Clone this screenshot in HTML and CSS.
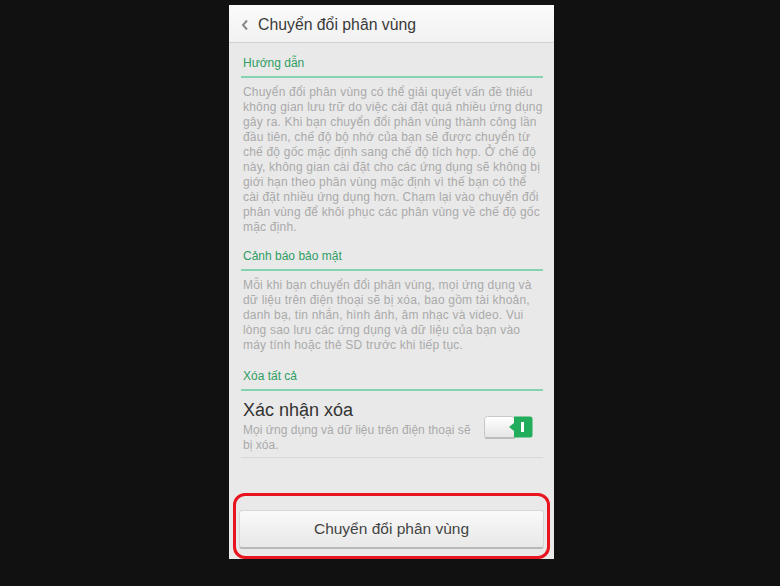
FILE: index.html
```html
<!DOCTYPE html>
<html lang="vi">
<head>
<meta charset="utf-8">
<title>Chuyển đổi phân vùng</title>
<link rel="stylesheet" href="styles.css">
</head>
<body>
<div class="screen">
  <header class="topbar">
    <svg class="back" width="8" height="12" viewBox="0 0 8 12"><path d="M6 1.5 L2 6 L6 10.5" fill="none" stroke="#888" stroke-width="2"/></svg>
    <span class="title">Chuyển đổi phân vùng</span>
  </header>
  <main class="content">
    <h2 class="sec">Hướng dẫn</h2>
    <p class="para">Chuyển đổi phân vùng có thể giải quyết vấn đề thiếu<br>không gian lưu trữ do việc cài đặt quá nhiều ứng dụng<br>gây ra. Khi bạn chuyển đổi phân vùng thành công lần<br>đầu tiên, chế độ bộ nhớ của bạn sẽ được chuyển từ<br>chế độ gốc mặc định sang chế độ tích hợp. Ở chế độ<br>này, không gian cài đặt cho các ứng dụng sẽ không bị<br>giới hạn theo phân vùng mặc định vì thế bạn có thể<br>cài đặt nhiều ứng dụng hơn. Chạm lại vào chuyển đổi<br>phân vùng để khôi phục các phân vùng về chế độ gốc<br>mặc định.</p>
    <h2 class="sec sec2">Cảnh báo bảo mật</h2>
    <p class="para">Mỗi khi bạn chuyển đổi phân vùng, mọi ứng dụng và<br>dữ liệu trên điện thoại sẽ bị xóa, bao gồm tài khoản,<br>danh bạ, tin nhắn, hình ảnh, âm nhạc và video. Vui<br>lòng sao lưu các ứng dụng và dữ liệu của bạn vào<br>máy tính hoặc thẻ SD trước khi tiếp tục.</p>
    <h2 class="sec sec3">Xóa tất cả</h2>
    <div class="row">
      <div class="row-text">
        <div class="row-title">Xác nhận xóa</div>
        <div class="row-sub">Mọi ứng dụng và dữ liệu trên điện thoại sẽ<br>bị xóa.</div>
      </div>
      <svg class="toggle" width="50" height="24" viewBox="0 0 50 24">
        <defs>
          <linearGradient id="wg" x1="0" y1="0" x2="0" y2="1">
            <stop offset="0" stop-color="#ffffff"/>
            <stop offset="1" stop-color="#e4e4e4"/>
          </linearGradient>
        </defs>
        <rect x="0.5" y="0.5" width="30" height="22" rx="3" fill="url(#wg)" stroke="#c8c8c8"/>
        <rect x="1" y="21" width="30" height="2" rx="1" fill="#bdbdbd"/>
        <path d="M30 0.5 H46 Q48.5 0.5 48.5 3 V19 Q48.5 21.5 46 21.5 H30 V15 L25 11 L30 7 Z" fill="#22ad5c"/>
        <rect x="37" y="6" width="3" height="10" fill="#ffffff"/>
      </svg>
    </div>
    <div class="spacer"></div>
    <div class="highlight">
      <button class="btn">Chuyển đổi phân vùng</button>
    </div>
  </main>
</div>
</body>
</html>
```

FILE: styles.css
```css
html, body {
  margin: 0;
  padding: 0;
}
body {
  background: #111111;
  width: 780px;
  height: 586px;
  overflow: hidden;
  font-family: "Liberation Sans", Arial, sans-serif;
}
.screen {
  margin: 5px 0 0 229px;
  width: 325px;
  height: 554px;
  background: #e9e9e9;
  display: flex;
  flex-direction: column;
}
.topbar {
  height: 38px;
  flex: none;
  display: flex;
  align-items: center;
  padding: 2px 0 0 12px;
  box-sizing: border-box;
  background: linear-gradient(#fbfbfb, #f1f1f1);
  border-bottom: 1px solid #d2d2d2;
}
.back {
  margin-right: 9px;
}
.title {
  font-size: 15.8px;
  color: #3a3a3a;
}
.content {
  flex: 1;
  display: flex;
  flex-direction: column;
  padding: 0 11px 0 12px;
}
.sec {
  margin: 0;
  font-size: 12px;
  line-height: 14px;
  font-weight: normal;
  color: #2f9e63;
  padding: 13px 0 6px 2px;
  border-bottom: 2px solid #86d3b2;
}
.sec2 {
  padding-top: 14px;
}
.sec3 {
  padding-top: 16px;
}
.para {
  margin: 7px 0 0 0;
  padding-left: 2px;
  font-size: 12px;
  letter-spacing: 0.2px;
  line-height: 15px;
  color: #aaaaaa;
  white-space: nowrap;
}
.row {
  display: flex;
  align-items: center;
  justify-content: space-between;
  padding: 8px 9px 4px 2px;
  border-bottom: 1px solid #d8d8d8;
}
.row-title {
  font-size: 18px;
  line-height: 22px;
  color: #333333;
}
.row-sub {
  margin-top: 2px;
  font-size: 12px;
  letter-spacing: 0.05px;
  line-height: 15px;
  color: #aaaaaa;
  white-space: nowrap;
}
.toggle {
  flex: none;
  margin-top: 4px;
}
.spacer {
  flex: 1;
}
.highlight {
  margin: 0 -7px 0 -8px;
  border: 3px solid #e8141f;
  border-radius: 12px;
  padding: 14px 3px 7px 3px;
}
.btn {
  display: block;
  width: 100%;
  height: 39px;
  border: 1px solid #d6d6d6;
  border-bottom: 2px solid #b9b9b9;
  border-radius: 3px;
  background: linear-gradient(#f9f9f9, #e8e8e8);
  font-family: "Liberation Sans", Arial, sans-serif;
  font-size: 15.5px;
  color: #444444;
  padding: 0;
}
```
